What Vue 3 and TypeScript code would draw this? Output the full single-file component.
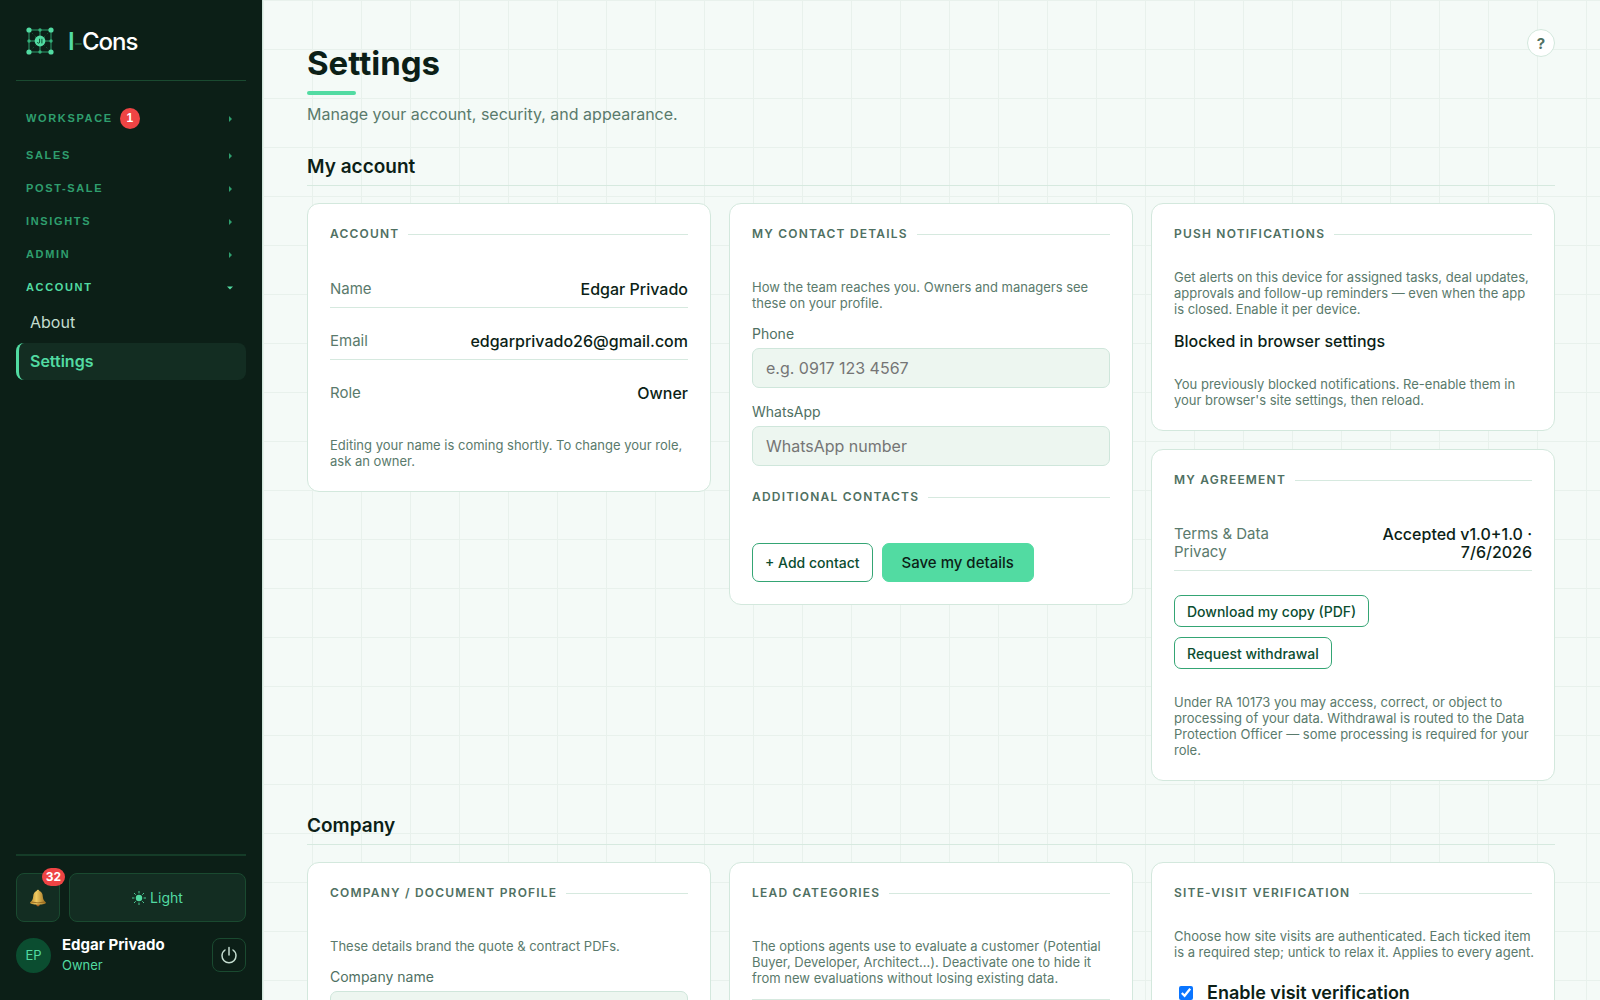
<script setup lang="ts">
import { ref } from 'vue'

interface NavGroup {
  label: string
  badge?: number
  open?: boolean
}

const groups: NavGroup[] = [
  { label: 'Workspace', badge: 1 },
  { label: 'Sales' },
  { label: 'Post-sale' },
  { label: 'Insights' },
  { label: 'Admin' },
  { label: 'Account', open: true },
]

const account = [
  { label: 'Name', value: 'Edgar Privado' },
  { label: 'Email', value: 'edgarprivado26@gmail.com' },
  { label: 'Role', value: 'Owner' },
]

const phone = ref('')
const whatsapp = ref('')
const companyName = ref('')
const visitVerification = ref(true)
</script>

<template>
  <div class="app">
    <aside class="sidebar">
      <a class="brand" href="#">
        <svg class="logo" viewBox="0 0 28 28" aria-hidden="true">
          <g fill="none" stroke="#2f9e6e" stroke-width="1">
            <path d="M3 3H25V25H3ZM14 3V25M3 14H25" />
            <path d="M3 3L25 25M25 3L3 25" stroke="#1a4a30" stroke-dasharray="2 2" />
          </g>
          <g fill="#34b27b">
            <circle cx="14" cy="3" r="1.7" /><circle cx="14" cy="25" r="1.7" />
            <circle cx="3" cy="14" r="1.7" /><circle cx="25" cy="14" r="1.7" />
          </g>
          <g fill="#52dba2">
            <circle cx="3" cy="3" r="2.6" /><circle cx="25" cy="3" r="2.6" />
            <circle cx="3" cy="25" r="2.6" /><circle cx="25" cy="25" r="2.6" />
            <circle cx="14" cy="14" r="5.4" />
          </g>
          <path d="M13.6 11.8V15Q13.6 16.2 12.5 16.2Q11.6 16.2 11.4 15.3M15.9 11.8V16.4" fill="none" stroke="#0b4d30" stroke-width="1" />
        </svg>
        <span class="wordmark"><span class="i">I</span><span class="dash">-</span>Cons</span>
      </a>

      <nav class="nav">
        <button v-for="g in groups" :key="g.label" class="group" :class="{ open: g.open }" type="button">
          <span>{{ g.label }}</span>
          <span v-if="g.badge" class="count">{{ g.badge }}</span>
          <svg class="caret" viewBox="0 0 6 6" aria-hidden="true">
            <path v-if="g.open" d="M0 1.5H6L3 4.5Z" /><path v-else d="M2 0L5 3L2 6Z" />
          </svg>
        </button>
        <a class="item" href="#">About</a>
        <a class="item active" href="#" aria-current="page">Settings</a>
      </nav>

      <div class="foot">
        <div class="tools">
          <button class="tool bell" type="button" aria-label="Notifications">
            <svg viewBox="0 0 18 18" aria-hidden="true">
              <defs>
                <linearGradient id="brass" x1="0" x2="1">
                  <stop offset="0" stop-color="#b9872a" /><stop offset=".4" stop-color="#f0cb62" /><stop offset="1" stop-color="#9a6a1c" />
                </linearGradient>
              </defs>
              <circle cx="9" cy="15.6" r="1.8" fill="#a8611f" />
              <path d="M9 .8Q10.3 .8 10.4 2.1Q13.6 3.2 13.8 7.5Q14 11.5 17 13.4Q17 15.4 9 15.4Q1 15.4 1 13.4Q4 11.5 4.2 7.5Q4.4 3.2 7.6 2.1Q7.7 .8 9 .8Z" fill="url(#brass)" />
              <path d="M2.4 13Q9 14.8 15.6 13" fill="none" stroke="#8a5f1b" stroke-width=".8" />
            </svg>
            <span class="alerts">32</span>
          </button>
          <button class="tool theme" type="button">
            <svg viewBox="0 0 14 14" aria-hidden="true">
              <circle cx="7" cy="7" r="3.2" fill="currentColor" />
              <path d="M7 0V2.4M7 11.6V14M0 7H2.4M11.6 7H14M2 2L3.7 3.7M10.3 10.3L12 12M12 2L10.3 3.7M3.7 10.3L2 12" stroke="currentColor" stroke-width=".9" />
            </svg>
            <span>Light</span>
          </button>
        </div>
        <div class="user">
          <span class="avatar">EP</span>
          <div class="who"><strong>Edgar Privado</strong><span>Owner</span></div>
          <button class="power" type="button" aria-label="Sign out">
            <svg viewBox="0 0 18 18" fill="none" stroke="currentColor" stroke-width="1.5" stroke-linecap="round" aria-hidden="true">
              <path d="M9 1.5V9M5 4Q2 6 2 9.8A7 7 0 0 0 16 9.8Q16 6 13 4" />
            </svg>
          </button>
        </div>
      </div>
    </aside>

    <main class="main">
      <header class="top">
        <div class="titles">
          <h1>Settings</h1>
          <p class="sub">Manage your account, security, and appearance.</p>
        </div>
        <button class="help" type="button" aria-label="Help">?</button>
      </header>

      <h2>My account</h2>
      <div class="grid">
        <section class="card">
          <h3>Account</h3>
          <dl class="rows">
            <div v-for="r in account" :key="r.label" class="row">
              <dt>{{ r.label }}</dt>
              <dd>{{ r.value }}</dd>
            </div>
          </dl>
          <p class="note after">Editing your name is coming shortly. To change your role, ask an owner.</p>
        </section>

        <section class="card">
          <h3>My contact details</h3>
          <p class="note lead">How the team reaches you. Owners and managers see these on your profile.</p>
          <div class="field">
            <label for="phone">Phone</label>
            <input id="phone" v-model="phone" type="tel" placeholder="e.g. 0917 123 4567">
          </div>
          <div class="field">
            <label for="whatsapp">WhatsApp</label>
            <input id="whatsapp" v-model="whatsapp" type="tel" placeholder="WhatsApp number">
          </div>
          <h3 class="inner">Additional contacts</h3>
          <div class="actions">
            <button class="btn" type="button">+ Add contact</button>
            <button class="btn primary" type="button">Save my details</button>
          </div>
        </section>

        <div class="stack">
          <section class="card">
            <h3>Push notifications</h3>
            <p class="note intro">Get alerts on this device for assigned tasks, deal updates, approvals and follow-up reminders — even when the app is closed. Enable it per device.</p>
            <p class="status">Blocked in browser settings</p>
            <p class="note after">You previously blocked notifications. Re-enable them in your browser's site settings, then reload.</p>
          </section>

          <section class="card">
            <h3>My agreement</h3>
            <dl class="rows">
              <div class="row ruled">
                <dt>Terms &amp; Data Privacy</dt>
                <dd>Accepted v1.0+1.0 · 7/6/2026</dd>
              </div>
            </dl>
            <div class="choices">
              <button class="btn small" type="button">Download my copy (PDF)</button>
              <button class="btn small" type="button">Request withdrawal</button>
            </div>
            <p class="note after">Under RA 10173 you may access, correct, or object to processing of your data. Withdrawal is routed to the Data Protection Officer — some processing is required for your role.</p>
          </section>
        </div>
      </div>

      <h2 class="next">Company</h2>
      <div class="grid">
        <section class="card">
          <h3>Company / Document profile</h3>
          <p class="note lead">These details brand the quote &amp; contract PDFs.</p>
          <div class="field">
            <label for="company">Company name</label>
            <input id="company" v-model="companyName" type="text">
          </div>
        </section>
        <section class="card">
          <h3>Lead categories</h3>
          <p class="note lead">The options agents use to evaluate a customer (Potential Buyer, Developer, Architect…). Deactivate one to hide it from new evaluations without losing existing data.</p>
          <hr>
        </section>
        <section class="card">
          <h3>Site-visit verification</h3>
          <p class="note intro">Choose how site visits are authenticated. Each ticked item is a required step; untick to relax it. Applies to every agent.</p>
          <label class="check"><input v-model="visitVerification" type="checkbox"><span>Enable visit verification</span></label>
        </section>
      </div>
    </main>
  </div>
</template>

<style>
body {
  margin: 0;
}
</style>

<style scoped>
* {
  box-sizing: border-box;
}
h1, h2, h3, p, dl, dd {
  margin: 0;
}
button, input {
  font: inherit;
}
.app {
  display: flex;
  height: 100vh;
  font-family: Inter, 'Liberation Sans', sans-serif;
  font-size: 16px;
  color: #0c1f17;
}
a {
  color: inherit;
  text-decoration: none;
}

/* Sidebar */
.sidebar {
  flex: none;
  display: flex;
  flex-direction: column;
  width: 263px;
  padding: 0 16px;
  background: #0c1f17;
  border-right: 1px solid #cfe6db;
}
.brand {
  display: flex;
  align-items: center;
  gap: 14px;
  height: 81px;
  padding: 2px 10px 0;
  border-bottom: 1px solid #1a4a30;
}
.logo {
  width: 28px;
  height: 28px;
}
.wordmark {
  font-size: 24px;
  font-weight: 500;
  letter-spacing: -1px;
  color: #fff;
}
.i {
  color: #52dba2;
  font-weight: 600;
}
.dash {
  font-size: 20px;
  color: #1f5a3a;
}
.nav {
  flex: 1;
  display: flex;
  flex-direction: column;
  padding-top: 17px;
}
.group {
  display: flex;
  align-items: center;
  gap: 7px;
  padding: 10px 13px 10px 10px;
  border: 0;
  background: none;
  color: #2f9e6e;
  font-family: 'Liberation Sans', Arial, sans-serif;
  font-size: 11px;
  line-height: 13px;
  font-weight: 700;
  letter-spacing: 0.15em;
  text-transform: uppercase;
}
.group.open {
  color: #52dba2;
}
.count {
  display: grid;
  place-items: center;
  width: 20px;
  height: 21px;
  border-radius: 50%;
  background: #ef4444;
  color: #fff;
  font-size: 12px;
  letter-spacing: 0;
}
.caret {
  width: 6px;
  height: 6px;
  margin-left: auto;
  fill: currentColor;
}
.item {
  margin-bottom: 2px;
  padding: 9px 11px;
  border-left: 3px solid transparent;
  border-radius: 8px;
  line-height: 19px;
  color: #c3dccf;
}
.item.active {
  border-color: #52dba2;
  background: #132d22;
  color: #52dba2;
  font-weight: 600;
}
.foot {
  padding: 17px 0 24px;
  border-top: 2px solid #153c28;
}
.tools {
  display: flex;
  gap: 9px;
}
.tool {
  display: flex;
  align-items: center;
  justify-content: center;
  gap: 4px;
  height: 49px;
  border: 1px solid #1a4a30;
  border-radius: 8px;
  background: #132d22;
  color: #52dba2;
  font-size: 14px;
}
.bell {
  position: relative;
  width: 44px;
}
.bell svg {
  width: 18px;
  height: 18px;
}
.alerts {
  position: absolute;
  top: -6px;
  right: -6px;
  padding: 0 4px;
  border-radius: 9px;
  background: #ef4444;
  color: #fff;
  font-size: 12px;
  line-height: 18px;
  font-weight: 700;
}
.theme {
  flex: 1;
}
.theme svg {
  width: 14px;
  height: 14px;
}
.user {
  display: flex;
  align-items: center;
  gap: 11px;
  margin-top: 12px;
}
.avatar {
  display: grid;
  place-items: center;
  width: 35px;
  height: 35px;
  border-radius: 50%;
  background: #0b4d30;
  color: #52dba2;
  font-size: 13px;
}
.who {
  flex: 1;
  display: flex;
  flex-direction: column;
  font-size: 13px;
  line-height: 21px;
  color: #52dba2;
}
.who strong {
  font-size: 15px;
  color: #fff;
}
.power {
  display: grid;
  place-items: center;
  width: 34px;
  height: 34px;
  padding: 0;
  border: 1px solid #1a4a30;
  border-radius: 8px;
  background: none;
  color: #c3dccf;
}
.power svg {
  width: 18px;
  height: 18px;
}

/* Page */
.main {
  flex: 1;
  min-width: 0;
  padding: 29px 45px 45px 44px;
  overflow-y: auto;
  scrollbar-width: none;
  background-color: #f4faf7;
  background-image:
    linear-gradient(90deg, #e8f1ec 1px, transparent 1px),
    linear-gradient(#e8f1ec 1px, transparent 1px);
  background-size: 49px 49px;
}
.top {
  display: flex;
  justify-content: space-between;
  align-items: flex-start;
}
.titles {
  padding-top: 14px;
}
h1 {
  font-size: 33px;
  line-height: 40px;
  font-weight: 700;
}
h1::after {
  content: '';
  display: block;
  width: 49px;
  height: 4px;
  margin: 8px 0 7px;
  border-radius: 2px;
  background: #52dba2;
}
.sub {
  color: #5a7a6c;
  line-height: 24px;
}
.help {
  width: 28px;
  height: 28px;
  padding: 0;
  border: 1px solid #d3e8dd;
  border-radius: 50%;
  background: #fff;
  color: #4f7062;
  font-size: 15px;
  font-weight: 700;
}
h2 {
  margin: 29px 0 17px;
  padding-bottom: 6px;
  border-bottom: 1px solid #d6e9df;
  font-size: 19px;
  line-height: 24px;
  font-weight: 600;
}
h2.next {
  margin-top: 33px;
}
.grid {
  display: grid;
  grid-template-columns: repeat(3, minmax(0, 1fr));
  gap: 18px;
  align-items: start;
}
.stack {
  display: grid;
  gap: 18px;
}
.card {
  padding: 22px 18px 22px 22px;
  border: 1px solid #d3e8dd;
  border-radius: 12px;
  background: #fff;
}
.card > :not(.note) {
  margin-right: 4px;
}
h3 {
  display: flex;
  align-items: center;
  gap: 9px;
  font-size: 12px;
  line-height: 16px;
  font-weight: 600;
  letter-spacing: 0.1em;
  text-transform: uppercase;
  color: #4f7062;
}
h3::after {
  content: '';
  flex: 1;
  height: 1px;
  background: #d6e9df;
}
h3.inner {
  margin-top: 23px;
}
.rows {
  margin-top: 14px;
}
.row {
  display: flex;
  justify-content: space-between;
  gap: 16px;
  padding: 24px 0 9px;
  border-bottom: 1px solid #d6e9df;
  line-height: 18px;
}
.row:last-child:not(.ruled) {
  border-bottom: 0;
}
dt {
  font-size: 15px;
  color: #5a7a6c;
}
dd {
  font-weight: 500;
  text-align: right;
}
.row.ruled {
  padding-top: 23px;
}
.ruled dt {
  width: 110px;
}
.ruled dd {
  width: 160px;
}
.note {
  font-size: 13px;
  line-height: 16px;
  color: #5a7a6c;
}
.lead {
  margin: 37px 0 13px;
}
.lead + .field {
  margin-top: 14px;
}
.intro {
  margin: 27px 0 14px;
}
.after {
  margin-top: 25px;
}
.rows + .after {
  margin-top: 26px;
}
.card > hr {
  height: 1px;
  margin: 13px 4px 0 0;
  border: 0;
  background: #d6e9df;
}
.status {
  line-height: 20px;
  font-weight: 500;
}
.field + .field {
  margin-top: 15px;
}
.field label {
  display: block;
  margin-bottom: 5px;
  font-size: 14px;
  line-height: 18px;
  color: #4f7062;
}
.field input {
  display: block;
  width: 100%;
  height: 40px;
  padding: 0 13px;
  border: 1px solid #cfe6db;
  border-radius: 7px;
  background: #edf6f0;
}
.field input::placeholder {
  color: #757575;
}
.actions {
  display: flex;
  gap: 9px;
  margin-top: 38px;
}
.btn {
  height: 39px;
  padding: 0 12px;
  border: 1px solid #34a574;
  border-radius: 7px;
  background: #fff;
  color: #0b4d30;
  font-size: 14px;
  font-weight: 500;
}
.btn.primary {
  padding: 0 19px;
  border-color: #52dba2;
  background: #52dba2;
  color: #0c1f17;
  font-size: 15px;
}
.choices {
  display: flex;
  flex-direction: column;
  align-items: flex-start;
  gap: 10px;
  margin-top: 24px;
}
.btn.small {
  height: 32px;
}
.check {
  display: flex;
  align-items: center;
  gap: 14px;
  margin-top: 22px;
  padding-left: 5px;
  font-size: 18px;
  line-height: 22px;
  font-weight: 600;
}
.check input {
  width: 14px;
  height: 14px;
  margin: 0;
  accent-color: #0a75ff;
}
</style>
